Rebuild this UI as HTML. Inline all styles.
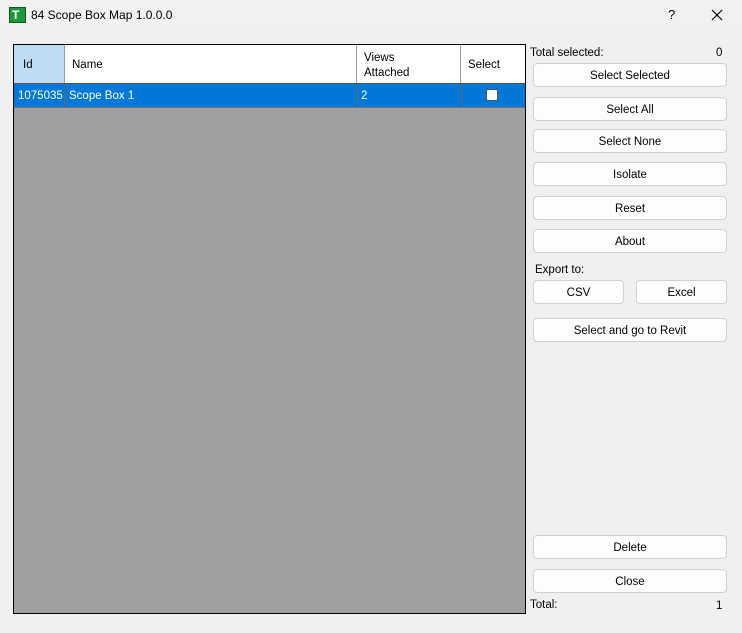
<!DOCTYPE html>
<html><head><style>
*{box-sizing:border-box;margin:0;padding:0}
body{width:742px;height:633px;background:#f0f0f0;font-family:"Liberation Sans",sans-serif;font-size:11.5px;color:#000;position:relative;overflow:hidden}
.a{position:absolute}
.title{left:0;top:0;width:742px;height:31px;background:#f3f0f0}
.btn{position:absolute;background:#fdfdfd;border:1px solid #d0d0d0;border-radius:4px;text-align:center;line-height:24px;height:24px}
.hd{position:absolute;top:0;height:38px;border-right:1px solid #999;background:#fff}
</style></head><body>
<div class="a title"></div>
<div class="a" style="left:9px;top:7px;width:17px;height:16px;background:#1c9a3b;border:1px solid #0c5a20"></div>
<div class="a" style="left:12px;top:9px;color:#fff;font-weight:bold;font-size:12px;line-height:12px">T</div>
<div class="a" style="left:31px;top:8px;font-size:12px">84 Scope Box Map 1.0.0.0</div>
<div class="a" style="left:668px;top:7px;font-size:13px">?</div>
<svg class="a" style="left:711px;top:9px" width="12" height="12"><path d="M1 1L11 11M11 1L1 11" stroke="#000" stroke-width="1.2"/></svg>
<div class="a" style="left:13px;top:44px;width:513px;height:570px;background:#a0a0a0;border:1px solid #000">
 <div class="hd" style="left:0;width:51px;background:#bfdcf3;padding:14px 0 0 9px">Id</div>
 <div class="hd" style="left:51px;width:292px;padding:14px 0 0 7px">Name</div>
 <div class="hd" style="left:343px;width:104px;padding:6px 0 0 7px;line-height:15px">Views<br>Attached</div>
 <div class="hd" style="left:447px;width:64px;border-right:none;padding:14px 0 0 7px">Select</div>
 <div class="a" style="left:0;top:38px;width:511px;height:25px;background:#0078d7;border-top:1px solid #555;border-bottom:1px solid #777;color:#fff">
  <div class="a" style="left:4px;top:6px">1075035</div>
  <div class="a" style="left:50px;top:0;height:24px;border-left:1px solid #666"></div>
  <div class="a" style="left:55px;top:6px">Scope Box 1</div>
  <div class="a" style="left:342px;top:0;height:24px;border-left:1px solid #666"></div>
  <div class="a" style="left:347px;top:6px">2</div>
  <div class="a" style="left:446px;top:0;height:24px;border-left:1px solid #666"></div>
  <div class="a" style="left:472px;top:5px;width:12px;height:12px;background:#fff;border:1px solid #555;border-radius:2px"></div>
 </div>
</div>
<div class="a" style="left:530px;top:47px">Total selected:</div>
<div class="a" style="left:716px;top:47px">0</div>
<div class="btn" style="left:533px;top:63px;width:194px">Select Selected</div>
<div class="btn" style="left:533px;top:97px;width:194px">Select All</div>
<div class="btn" style="left:533px;top:129px;width:194px">Select None</div>
<div class="btn" style="left:533px;top:162px;width:194px">Isolate</div>
<div class="btn" style="left:533px;top:196px;width:194px">Reset</div>
<div class="btn" style="left:533px;top:229px;width:194px">About</div>
<div class="a" style="left:535px;top:264px">Export to:</div>
<div class="btn" style="left:533px;top:280px;width:91px">CSV</div>
<div class="btn" style="left:636px;top:280px;width:91px">Excel</div>
<div class="btn" style="left:533px;top:318px;width:194px">Select and go to Revit</div>
<div class="btn" style="left:533px;top:535px;width:194px">Delete</div>
<div class="btn" style="left:533px;top:569px;width:194px">Close</div>
<div class="a" style="left:530px;top:599px">Total:</div>
<div class="a" style="left:716px;top:600px">1</div>
</body></html>
